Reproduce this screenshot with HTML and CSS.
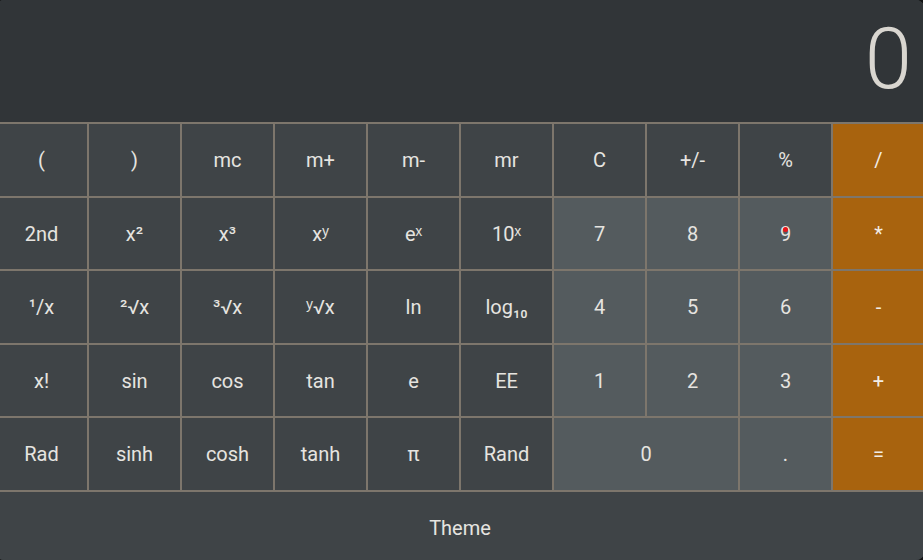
FILE: index.html
```html
<!DOCTYPE html>
<html lang="en">
<head>
<meta charset="utf-8">
<title>Calculator</title>
<link rel="stylesheet" href="styles.css">
</head>
<body>
<div class="calc">
  <div class="display">0</div>
  <div class="keys">
    <button class="key fn">(</button>
    <button class="key fn">)</button>
    <button class="key fn">mc</button>
    <button class="key fn">m+</button>
    <button class="key fn">m-</button>
    <button class="key fn">mr</button>
    <button class="key fn">C</button>
    <button class="key fn">+/-</button>
    <button class="key fn">%</button>
    <button class="key op">/</button>

    <button class="key fn">2nd</button>
    <button class="key fn">x²</button>
    <button class="key fn">x³</button>
    <button class="key fn">xʸ</button>
    <button class="key fn">eˣ</button>
    <button class="key fn">10ˣ</button>
    <button class="key num">7</button>
    <button class="key num">8</button>
    <button class="key num nine">9<span class="dot"></span></button>
    <button class="key op">*</button>

    <button class="key fn">¹/x</button>
    <button class="key fn">²√x</button>
    <button class="key fn">³√x</button>
    <button class="key fn">ʸ√x</button>
    <button class="key fn">ln</button>
    <button class="key fn">log₁₀</button>
    <button class="key num">4</button>
    <button class="key num">5</button>
    <button class="key num">6</button>
    <button class="key op">-</button>

    <button class="key fn">x!</button>
    <button class="key fn">sin</button>
    <button class="key fn">cos</button>
    <button class="key fn">tan</button>
    <button class="key fn">e</button>
    <button class="key fn">EE</button>
    <button class="key num">1</button>
    <button class="key num">2</button>
    <button class="key num">3</button>
    <button class="key op">+</button>

    <button class="key fn">Rad</button>
    <button class="key fn">sinh</button>
    <button class="key fn">cosh</button>
    <button class="key fn">tanh</button>
    <button class="key fn">π</button>
    <button class="key fn">Rand</button>
    <button class="key num wide">0</button>
    <button class="key num">.</button>
    <button class="key op">=</button>
  </div>
  <button class="theme">Theme</button>
</div>
</body>
</html>
```

FILE: styles.css
```css
html, body {
  margin: 0;
  padding: 0;
  background: #121314;
  height: 100%;
  overflow: hidden;
}

body {
  font-family: Roboto, "Liberation Sans", sans-serif;
  color: #e6e4e0;
}

.calc {
  width: 928px;
  height: 560px;
  margin-left: -4px;
  display: flex;
  flex-direction: column;
  border-radius: 8px;
  overflow: hidden;
  background: #3f4447;
}

.display {
  height: 122px;
  background: #313538;
  color: #d9d6d0;
  font-size: 85px;
  font-weight: 300;
  line-height: 1;
  display: flex;
  justify-content: flex-end;
  align-items: center;
  padding: 0 12px 3px 0;
  box-sizing: border-box;
}

.keys {
  display: grid;
  grid-template-columns: repeat(10, 91px);
  grid-template-rows: 72px 71px 72px 71px 72px;
  column-gap: 2px;
  row-gap: 2px;
  padding: 2px 0;
  background: #7d766c;
}

.key {
  border: 0;
  margin: 0;
  padding: 0;
  font-family: Roboto, "Liberation Sans", sans-serif;
  font-size: 20px;
  font-weight: 400;
  color: #e6e4e0;
  display: flex;
  align-items: center;
  justify-content: center;
}

.fn {
  background: #3f4447;
}

.num {
  background: #545b5e;
}

.op {
  background: #a8630e;
  color: #f2ede6;
}

.wide {
  grid-column: span 2;
}

.nine {
  position: relative;
}

.dot {
  position: absolute;
  left: 43px;
  top: 29px;
  width: 5px;
  height: 5px;
  border-radius: 50%;
  background: #e8141a;
}

.theme {
  flex: 1;
  border: 0;
  margin: 0;
  background: #3f4447;
  color: #e6e4e0;
  font-family: Roboto, "Liberation Sans", sans-serif;
  font-size: 20px;
  font-weight: 400;
  padding: 4px 0 0;
}
```
